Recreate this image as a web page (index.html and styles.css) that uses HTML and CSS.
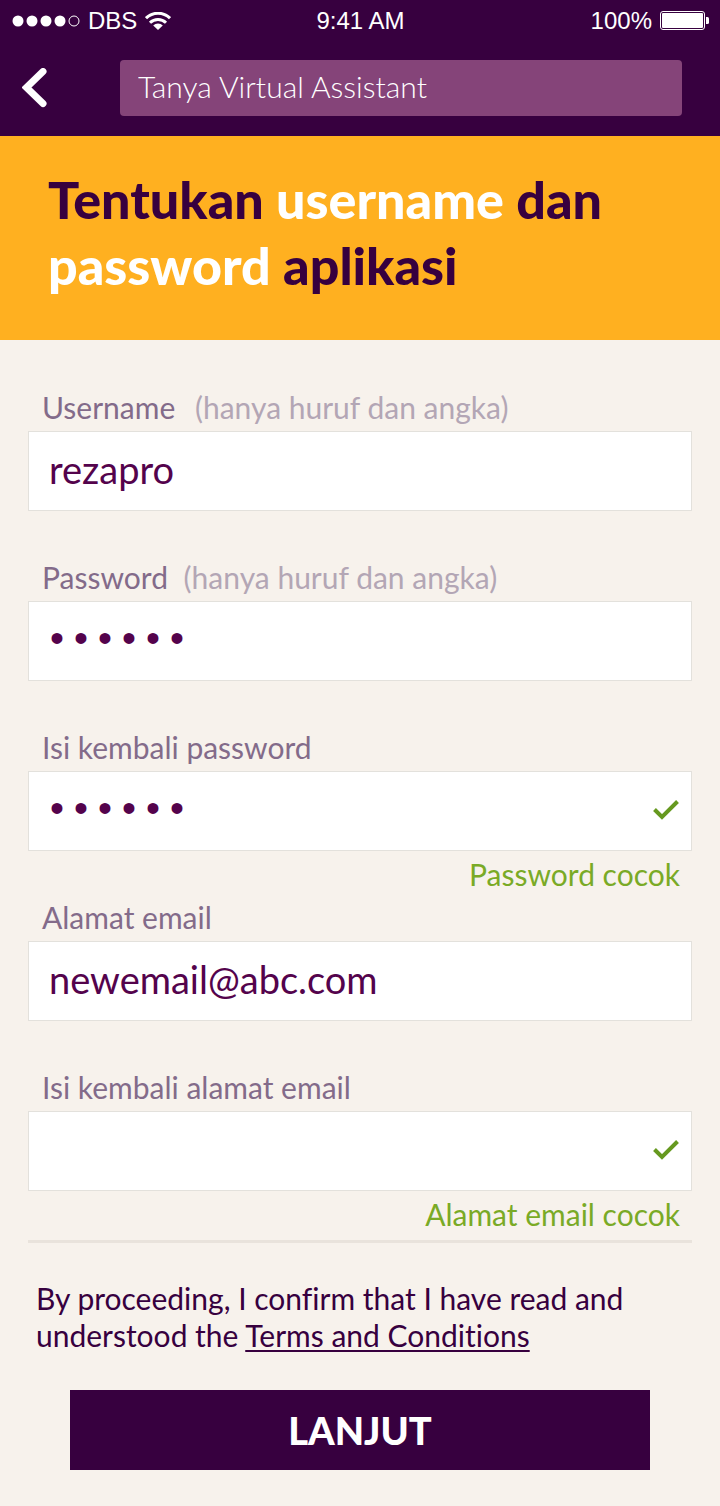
FILE: index.html
```html
<!DOCTYPE html>
<html lang="id">
<head>
<meta charset="utf-8">
<meta name="viewport" content="width=device-width, initial-scale=1">
<title>Tentukan username dan password aplikasi</title>
<link rel="stylesheet" href="styles.css">
</head>
<body>
<header class="top">
  <div class="status">
    <div class="status-left">
      <svg class="signal" width="68" height="12" viewBox="0 0 68 12" aria-hidden="true">
        <g fill="#fff"><circle cx="6" cy="6" r="5.5"/><circle cx="20" cy="6" r="5.5"/><circle cx="34" cy="6" r="5.5"/><circle cx="48" cy="6" r="5.5"/></g>
        <circle cx="62" cy="6" r="5" fill="none" stroke="#fff"/>
      </svg>
      <span>DBS</span>
      <svg class="wifi" width="26" height="18" viewBox="0 0 26 18" aria-hidden="true">
        <g fill="none" stroke="#fff" stroke-width="3"><path d="M1 6.200a17 17 0 0 1 24 0"/><path d="M5 10.800a11.300 11.300 0 0 1 16 0"/></g>
        <path d="M13 18L8.200 13.600a6.800 6.800 0 0 1 9.600 0z" fill="#fff"/>
      </svg>
    </div>
    <span>9:41 AM</span>
    <div class="status-right">
      <span>100%</span>
      <svg width="49" height="19" viewBox="0 0 49 19" aria-hidden="true">
        <rect x=".5" y=".5" width="44" height="18" rx="2.500" fill="none" stroke="#fff"/>
        <rect x="2" y="2" width="41" height="15" rx="1" fill="#fff"/>
        <path d="M46 6h1.500q1.500 0 1.500 1.500v4q0 1.500-1.500 1.500H46z" fill="#fff"/>
      </svg>
    </div>
  </div>
  <div class="bar">
    <button class="back" type="button" aria-label="Kembali">
      <svg width="26" height="40" viewBox="0 0 26 40" aria-hidden="true"><path d="M21 3.500L4.500 19.500 21 35.500" fill="none" stroke="#fff" stroke-width="7" stroke-linecap="round"/></svg>
    </button>
    <input class="ask" type="text" placeholder="Tanya Virtual Assistant" aria-label="Tanya Virtual Assistant">
  </div>
</header>
<section class="hero">
  <h1>Tentukan <em>username</em> dan <em>password</em> aplikasi</h1>
</section>
<main>
  <form class="form">
    <div class="field">
      <label for="user">Username <span class="note note-wide">(hanya huruf dan angka)</span></label>
      <input id="user" type="text" value="rezapro">
    </div>
    <div class="field">
      <label for="pass">Password <span class="note">(hanya huruf dan angka)</span></label>
      <input id="pass" type="password" value="secret">
    </div>
    <div class="field">
      <label for="pass2">Isi kembali password</label>
      <div class="control">
        <input id="pass2" type="password" value="secret">
        <svg class="tick" width="26" height="20" viewBox="0 0 26 20" aria-hidden="true"><path d="M1.500 9.500L9 17 24.500 1.500" fill="none" stroke="#66991f" stroke-width="4"/></svg>
      </div>
      <output class="hint" for="pass2">Password cocok</output>
    </div>
    <div class="field">
      <label for="mail">Alamat email</label>
      <input id="mail" type="text" value="newemail@abc.com">
    </div>
    <div class="field">
      <label for="mail2">Isi kembali alamat email</label>
      <div class="control">
        <input id="mail2" type="text">
        <svg class="tick" width="26" height="20" viewBox="0 0 26 20" aria-hidden="true"><path d="M1.500 9.500L9 17 24.500 1.500" fill="none" stroke="#66991f" stroke-width="4"/></svg>
      </div>
      <output class="hint" for="mail2">Alamat email cocok</output>
    </div>
    <hr>
    <p class="terms">By proceeding, I confirm that I have read and understood the <a href="#terms">Terms and Conditions</a></p>
    <button class="next" type="submit">LANJUT</button>
  </form>
</main>
</body>
</html>
```
FILE: styles.css
```css
* { box-sizing: border-box; }
body {
  margin: 0;
  background: #f7f2ec;
  color: #37003f;
  font-family: Lato, sans-serif;
  font-variant-ligatures: none;
}
button, input { font-family: inherit; border: 0; margin: 0; }
svg { display: block; }
.top { background: #37003f; color: #fff; padding-bottom: 20px; }
.status {
  display: grid;
  grid-template-columns: 1fr auto 1fr;
  align-items: center;
  height: 41px;
  padding: 0 11px 0 12px;
  font: 24px/41px "Liberation Sans", sans-serif;
}
.status-left, .status-right { display: flex; align-items: center; gap: 8px; }
.status-right { justify-content: flex-end; }
.bar { display: flex; align-items: center; padding: 19px 38px 0 22px; }
.back { width: 98px; padding: 0; background: none; }
.ask {
  flex: 1;
  min-width: 0;
  height: 56px;
  padding: 0 18px 4px;
  border-radius: 4px;
  background: #854479;
  color: #fff;
  font-size: 30px;
  font-weight: 300;
}
.ask::placeholder { color: #fff; opacity: 1; }
.hero { background: #ffb020; padding: 30px 48px 42px; }
h1 { margin: 0; font-size: 52px; line-height: 66px; font-weight: 900; }
h1 em { font-style: normal; color: #fff; }
.form { display: flex; flex-direction: column; padding: 47px 28px 36px; }
.field { display: flex; flex-direction: column; min-height: 170px; }
.field label { padding: 0 0 4px 14px; font-size: 30px; line-height: 40px; color: #836b8a; }
.note { padding-left: 8px; color: #b3a6b5; }
.note-wide { padding-left: 12px; }
.field input {
  width: 100%;
  height: 80px;
  padding: 0 20px 4px;
  border: 1px solid #e3e1dc;
  background: #fff;
  color: #54034c;
  font-size: 38px;
}
.field input[type="password"] { padding: 0 16px; font-family: "Liberation Mono", monospace; font-size: 40px; }
.control { position: relative; }
.tick { position: absolute; right: 13px; top: 29px; }
.hint { padding-right: 12px; text-align: right; font-size: 30px; line-height: 46px; color: #7aaa26; }
hr { width: 100%; height: 3px; margin: 3px 0 0; border: 0; background: #e9e3dc; }
.terms { margin: 37px 0 36px; padding: 0 8px; font-size: 30px; line-height: 37px; }
.terms a { color: inherit; text-underline-offset: 3px; text-decoration-thickness: 2px; }
.next {
  height: 80px;
  margin: 0 42px;
  background: #37003f;
  color: #fff;
  font-size: 38px;
  font-weight: 900;
}
```
